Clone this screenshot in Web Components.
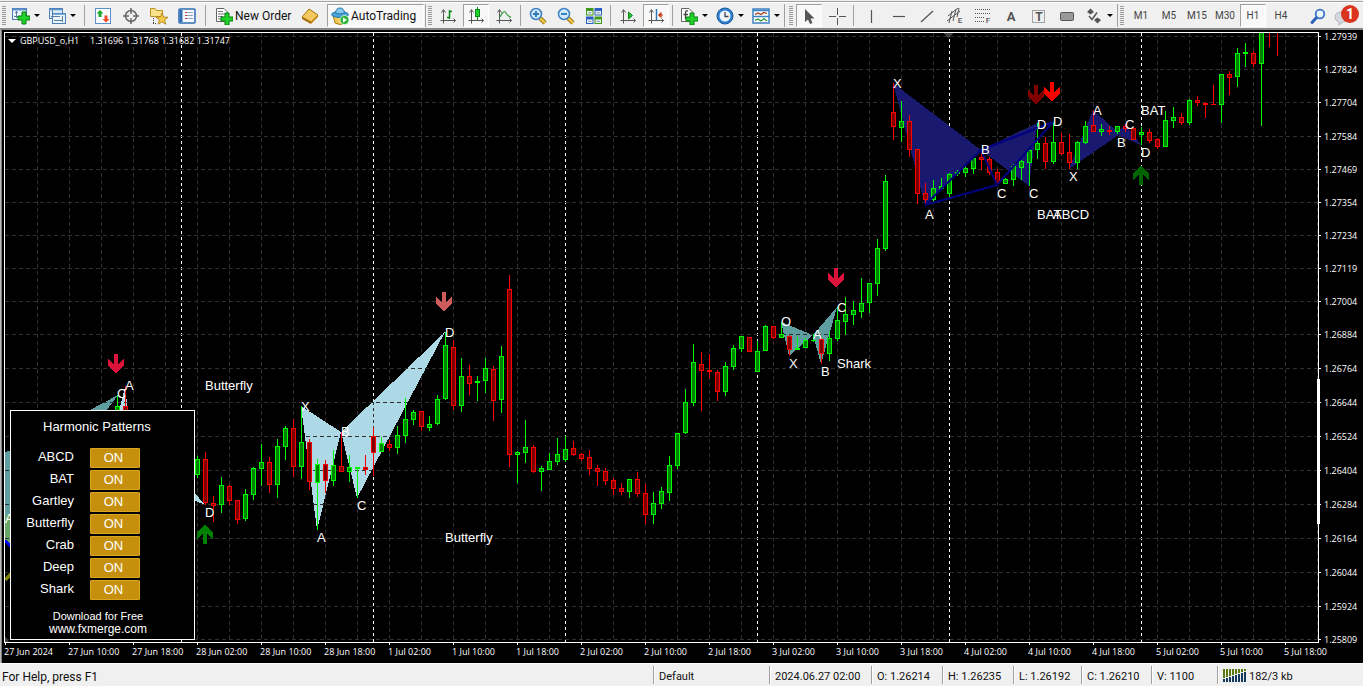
<!DOCTYPE html>
<html lang="en">
<head>
<meta charset="utf-8">
<title>GBPUSD_o,H1</title>
<style>
html, body { margin: 0; height: 100%; background: #f0f0f0; }
body { font-family: "Open Sans", "Noto Sans", sans-serif; overflow: hidden; }
</style>
</head>
<body>
<trading-terminal></trading-terminal>
<script>
/* ---------- icons (18 x 18 unless noted) ---------- */
const axes = '<path d="M4.500 3.500V16.500M1.500 13.500H16.500" stroke="#555" fill="none"/><path d="M2.500 5.500L4.500 2.500L6.500 5.500M14.500 11.500L16.500 13.500L14.500 15.500" stroke="#555" fill="none"/>';
const plus = (x, y) => `<path transform="translate(${x} ${y})" d="M4 0H8V4H12V8H8V12H4V8H0V4H4Z" fill="#1fd32b" stroke="#0a7d12"/>`;
const lens = sign => `<path d="M11 11L16 16" stroke="#8a6a10" stroke-width="4.500"/><path d="M11 11L16 16" stroke="#f0c742" stroke-width="2.500"/><circle cx="7" cy="7" r="5.500" fill="#cfe9fb" stroke="#3c7fc0" stroke-width="1.500"/><path d="${sign}" stroke="#2a78b8" stroke-width="1.800"/>`;
const glyph = (ch, x, y, size, weight) => `<text x="${x}" y="${y}" font-family="Roboto, sans-serif" font-size="${size}" font-weight="${weight}" text-anchor="middle" fill="#555">${ch}</text>`;
const ICONS = {
  newchart: '<rect x=".5" y="1.500" width="14" height="11" fill="#e8f3fc" stroke="#4a7fb5"/><path d="M1 2.500H14" stroke="#5b93c9" stroke-width="2"/><path d="M4.500 4V11M2 9.500H12M3 5.500H6" stroke="#5d7f9f"/>' + plus(6, 5),
  profiles: '<rect x="1.500" y="1.500" width="13" height="10" fill="#dcebf8" stroke="#4a7fb5"/><rect x="4.500" y="6.500" width="13" height="10" fill="#e8f3fc" stroke="#4a7fb5"/><path d="M1 2.500H15M4 7H18" stroke="#5b93c9" stroke-width="1.500"/><path d="M4.500 3V10M6 13.500H15M14.500 9V15M3 9.500H12" stroke="#5d7f9f"/>',
  market: '<rect x="1.500" y="1.500" width="15" height="15" fill="#fbfdff" stroke="#5b93c9"/><path d="M6 3L9.500 6.500H7.500V10H4.500V6.500H2.500Z" fill="#1faa2e"/><path d="M12 15.500L15.500 12H13.500V8.500H10.500V12H8.500Z" fill="#ee4a2a"/>',
  target: '<circle cx="9" cy="9" r="5.500" fill="none" stroke="#666" stroke-width="1.500"/><path d="M9 1V7M9 11V17M1 9H7M11 9H17" stroke="#666" stroke-width="1.500"/>',
  folder: '<path d="M0.500 9.500V1.500H5L6.500 3.500H12.500V9.500Z" fill="#fbe28a" stroke="#b99126"/><path d="M3.500 11V17M3 16.500H7" stroke="#444" stroke-dasharray="1 1"/><path d="M12 6L13.600 10L18 10.300L14.600 13L15.800 17.200L12 14.800L8.200 17.200L9.400 13L6 10.300L10.400 10Z" fill="#f6c945" stroke="#a97c17" stroke-width=".8"/>',
  terminal: '<rect x="1" y="2" width="16" height="14" rx="1" fill="#f8fbff" stroke="#2e6eb2" stroke-width="1.500"/><path d="M3 3V15" stroke="#2e6eb2" stroke-width="3"/><path d="M7 5.500H9M7 8.500H9M7 11.500H9" stroke="#c33"/><path d="M9 5.500H15M9 8.500H15M9 11.500H15" stroke="#9ab"/>',
  order: '<path d="M1.500 1.500H9L12.500 5V14.500H1.500Z" fill="#fff" stroke="#666"/><path d="M3 4.500H8M3 7H10M3 9.500H8M3 12H7" stroke="#777"/>' + plus(6, 6),
  gold: '<path d="M1 10L8 2L17 8L10 15Z" fill="#f3c85e" stroke="#a8730f"/><path d="M1 10L10 15V17L1 12Z" fill="#a86d0c"/><path d="M10 15L17 8V10L10 17Z" fill="#c68a1a"/>',
  auto: '<path d="M2 8L4 16Q9 19 14 16L16 8Z" fill="#f3cb55" stroke="#a97c17"/><ellipse cx="9" cy="7.500" rx="8.500" ry="3" fill="#4aa3d8" stroke="#2a76a8"/><path d="M4.500 6Q5 1 9 1T13.500 6Q9 8 4.500 6Z" fill="#83c8ee" stroke="#2a76a8"/><circle cx="13.500" cy="13" r="4.500" fill="#27b437" stroke="#fff" stroke-width=".7"/><path d="M12 10.500V15.500L16 13Z" fill="#fff"/>',
  bars: axes + '<path d="M10.500 3V12M8 10.500H10.500M10.500 4.500H13" stroke="#0a8a1a" stroke-width="1.500" fill="none"/>',
  candles: axes + '<path d="M10.500 0V13" stroke="#0a8a1a"/><rect x="8.500" y="2.500" width="4" height="7" fill="#1fd32b" stroke="#0a8a1a"/>',
  line: axes + '<path d="M5 10Q9 2 11 6T16 10" stroke="#3fa34a" stroke-width="1.300" fill="none"/>',
  zoomin: lens('M4 7H10M7 4V10'),
  zoomout: lens('M4 7H10'),
  tile: '<rect x="1" y="1" width="7.500" height="7.500" fill="#3e9a1d"/><rect x="9.500" y="1" width="7.500" height="7.500" fill="#2d5fc4"/><rect x="1" y="9.500" width="7.500" height="7.500" fill="#2d5fc4"/><rect x="9.500" y="9.500" width="7.500" height="7.500" fill="#3e9a1d"/><path d="M2 4H7.500V7.500H2ZM10.500 4H16V7.500H10.500ZM2 12.500H7.500V16H2ZM10.500 12.500H16V16H10.500Z" fill="#f2f7ee"/><path d="M3 5.800H6.500M11.500 5.800H15M3 14.300H6.500M11.500 14.300H15" stroke="#7a9ab8"/>',
  scroll: axes + '<path d="M9.500 5V12L13.500 8.500Z" fill="#27c437" stroke="#0a8a1a"/>',
  shift: axes + '<path d="M9.500 2V13" stroke="#2a76b8" stroke-width="1.500"/><path d="M16 8H12M14 5.500L11.500 8L14 10.500Z" stroke="#c33b12" fill="#c33b12"/>',
  indicators: '<path d="M1.500 1.500H9L12.500 5V14.500H1.500Z" fill="#fff" stroke="#666"/><path d="M8 4Q5.500 3 5.500 6V12M3.500 7.500H8" stroke="#444" stroke-width="1.300" fill="none"/>' + plus(6, 6),
  clock: '<circle cx="9" cy="9" r="8" fill="#2f80d0" stroke="#195a9e"/><circle cx="9" cy="9" r="5.500" fill="#eef6fd"/><path d="M9 5V9.500H12.500" stroke="#445" stroke-width="1.300" fill="none"/>',
  template: '<rect x="1" y="2" width="16" height="14" fill="#fff" stroke="#3f82c4" stroke-width="1.500"/><path d="M1 3.500H17M1 9.500H17" stroke="#3f82c4" stroke-width="1.500"/><path d="M3 7.500L6 6L9 7.500L12 5.500L15 6.500" stroke="#a4341a" stroke-width="1.300" fill="none"/><path d="M3 13.500L6 12L9 14L12 11.500L15 14" stroke="#2a9a35" stroke-width="1.300" fill="none"/>',
  cursor: '<path d="M5 2V15L8 12.500L10 17L12.500 16L10.500 11.500H14.500Z" fill="#555"/>',
  cross: '<path d="M9.500 1V8M9.500 11V18M1 9.500H8M11 9.500H18" stroke="#555" fill="none"/>',
  vline: '<path d="M9.500 3V16" stroke="#555" stroke-width="1.200"/>',
  hline: '<path d="M3 9.500H15" stroke="#555" stroke-width="1.200"/>',
  trend: '<path d="M3 15L15 4" stroke="#555" stroke-width="1.300"/>',
  channel: '<path d="M1 14L14 4M2 9L12 1M3 16L6 4M7 14L10 2M11 10L13 1" stroke="#555" fill="none"/>' + glyph("E", 14, 16, 8, 500),
  fibo: '<path d="M1 2.500H16M1 6.500H16M1 10.500H10M1 14.500H10" stroke="#555" stroke-dasharray="1 1"/>' + glyph("F", 14, 16, 8, 500),
  text: glyph("A", 9, 14, 13, 700),
  label: '<rect x="2.500" y="3.500" width="12" height="12" fill="none" stroke="#555" stroke-dasharray="1 1"/>' + glyph("T", 9, 14, 12, 700),
  rect: '<rect x="2.500" y="5.500" width="13" height="8" rx="1" fill="#999" stroke="#555"/>',
  arrows: '<path d="M2 5L5.500 1.500L9 5L5.500 7.500Z" fill="#555"/><path d="M9 13L12.500 10.500L16 13L12.500 16.500Z" fill="#555"/><path d="M4 9L7 12.500L12 5.500" stroke="#555" fill="none" stroke-width="1.500"/>',
  search: '<path d="M8 10L3 15.500" stroke="#2c62b8" stroke-width="3" stroke-linecap="round"/><circle cx="11" cy="7" r="4.300" fill="#eef5fd" stroke="#3c74c8" stroke-width="1.800"/>',
};
const svgIcon = name => `<svg width="18" height="18" viewBox="0 0 18 18" aria-hidden="true">${ICONS[name]}</svg>`;
const shadow = (host, html) => { host.attachShadow({ mode: "open" }).innerHTML = html; return host.shadowRoot; };

/* A toolbar button: icon, optional slotted caption, optional drop-down mark. */
customElements.define("tool-button", class extends HTMLElement {
  connectedCallback() {
    const icon = this.getAttribute("icon");
    shadow(this, `<style>
      :host { display: flex; flex: none; width: 28px; }
      :host([menu]) { width: 36px; }
      :host([wide]) { width: auto; }
      button { flex: 1; display: flex; align-items: center; justify-content: center; gap: 4px; margin: 0 1px;
        padding: 0; border: 1px solid transparent; background: none; color: inherit; font: inherit; white-space: nowrap; }
      :host([wide]) button { justify-content: flex-start; padding: 0 3px; gap: 2px; }
      :host([pressed]) button { border-color: #a0a0a0 #fff #fff #a0a0a0; background: #f8f8f8; }
      svg { flex: none; }
      i { flex: none; border: 3px solid transparent; border-top-color: #000; border-bottom: 0; }
    </style><button aria-label="${this.getAttribute("name") || this.textContent}" ${this.hasAttribute("pressed") ? 'aria-pressed="true"' : ""}>
      ${icon ? svgIcon(icon) : ""}<slot></slot>${this.hasAttribute("menu") ? "<i></i>" : ""}</button>`);
  }
});

/* A dockable run of buttons with a grip at its left. */
customElements.define("tool-group", class extends HTMLElement {
  connectedCallback() {
    shadow(this, `<style>
      :host { display: flex; flex: none; border-right: 1px solid #a0a0a0; }
      :host([open]) { border-right: 0; }
      .grip { width: 4px; margin: 2px 2px; background: repeating-linear-gradient(#9a9a9a 0 1px, transparent 1px 2px); }
      :host([open]) .grip { margin-right: 3px; }
      ::slotted(hr) { width: 1px; height: auto; margin: 1px 3px 1px 2px; border: 0; background: #a0a0a0; }
      :host([roomy]) ::slotted(hr) { margin: 1px 4px; }
    </style><div class="grip"></div><slot></slot>`);
  }
});

customElements.define("tool-bar", class extends HTMLElement {
  connectedCallback() {
    shadow(this, `<style>
      :host { display: flex; flex: none; height: 23px; padding: 1px 0; background: #f0f0f0; border-top: 1px solid #fff;
        font: 12px Roboto, sans-serif; color: #111; border-bottom: 2px solid #888; margin-top: 2px; }
      .frames { font-size: 10px; color: #444; }
      .end { flex: 1; }
      .order { width: 84px; } .gold { width: 32px; } .auto { width: 99px; }
      .cursors { padding-left: 2px; }
      .news { position: relative; flex: none; width: 28px; margin-right: 3px; border: 0; padding: 0; background: none; }
      .news svg { position: absolute; left: 1px; top: 6px; }
      .badge { position: absolute; right: 1px; top: 1px; width: 18px; height: 18px; border-radius: 9px; background: #d9351f;
        color: #fff; font: bold 14px/18px Roboto, sans-serif; text-align: center; }
    </style>
    <tool-group roomy>
      <tool-button icon="newchart" name="New chart" menu></tool-button>
      <tool-button icon="profiles" name="Profiles" menu></tool-button><hr>
      <tool-button icon="market" name="Market Watch"></tool-button>
      <tool-button icon="target" name="Data Window"></tool-button>
      <tool-button icon="folder" name="Navigator"></tool-button>
      <tool-button icon="terminal" name="Terminal"></tool-button><hr>
      <tool-button class="order" icon="order" wide>New Order</tool-button>
      <tool-button class="gold" icon="gold" name="MetaEditor"></tool-button>
      <tool-button class="auto" icon="auto" wide pressed>AutoTrading</tool-button>
    </tool-group>
    <tool-group>
      <tool-button icon="bars" name="Bar Chart"></tool-button>
      <tool-button icon="candles" name="Candlesticks" pressed></tool-button>
      <tool-button icon="line" name="Line Chart"></tool-button><hr>
      <tool-button icon="zoomin" name="Zoom In"></tool-button>
      <tool-button icon="zoomout" name="Zoom Out"></tool-button>
      <tool-button icon="tile" name="Tile Windows"></tool-button><hr>
      <tool-button icon="scroll" name="Auto Scroll"></tool-button>
      <tool-button icon="shift" name="Chart Shift" pressed></tool-button><hr>
      <tool-button icon="indicators" name="Indicators" menu></tool-button>
      <tool-button icon="clock" name="Periods" menu></tool-button>
      <tool-button icon="template" name="Templates" menu></tool-button>
    </tool-group>
    <tool-group class="cursors">
      <tool-button icon="cursor" name="Cursor" pressed></tool-button>
      <tool-button icon="cross" name="Crosshair"></tool-button><hr>
      <tool-button icon="vline" name="Vertical Line"></tool-button>
      <tool-button icon="hline" name="Horizontal Line"></tool-button>
      <tool-button icon="trend" name="Trendline"></tool-button>
      <tool-button icon="channel" name="Equidistant Channel"></tool-button>
      <tool-button icon="fibo" name="Fibonacci Retracement"></tool-button>
      <tool-button icon="text" name="Text"></tool-button>
      <tool-button icon="label" name="Text Label"></tool-button>
      <tool-button icon="rect" name="Rectangle"></tool-button>
      <tool-button icon="arrows" name="Arrows" menu></tool-button>
    </tool-group>
    <tool-group class="frames" open>
      <tool-button>M1</tool-button><tool-button>M5</tool-button><tool-button>M15</tool-button>
      <tool-button>M30</tool-button><tool-button pressed>H1</tool-button><tool-button>H4</tool-button>
    </tool-group>
    <div class="end"></div>
    <tool-button icon="search" name="Search"></tool-button>
    <button class="news" aria-label="Messages"><svg width="18" height="16" viewBox="0 0 18 16"><path d="M9 2Q16 2 16 7Q16 12 10 12L6 15V12Q2 11 2 7Q2 2 9 2Z" fill="#d5d8de" stroke="#b4b8c0"/></svg><span class="badge">1</span></button>`);
  }
});

/* ---------- chart data: one row per hour: bar number, high, body top, body bottom, low, direction ---------- */
const BARS = `14 395 406 430 430 u|15 386 406 430 430 d|24 456 459 475 478 u|25 452 459 503 505 d|26 496 503 506 522 d|27 477 485 505 513 u
28 485 486 501 505 d|29 500 500 520 524 d|30 489 494 519 521 u|31 467 468 495 500 u|32 444 462 469 486 u|33 457 462 485 493 d
34 439 446 485 498 u|35 426 428 447 460 u|36 419 428 467 477 d|37 406 442 467 479 u|38 439 442 482 490 d|39 459 464 483 530 u
40 460 464 481 493 d|41 450 465 481 486 u|42 432 466 472 472 d|43 455 467 472 482 u|44 467 467 469 498 u|45 455 467 470 475 d
46 427 436 453 476 d|47 437 443 452 452 u|48 440 444 448 451 d|49 426 435 448 454 u|50 398 419 436 443 u|51 410 412 420 425 u
52 411 411 427 431 d|53 416 424 428 431 u|54 395 399 424 425 u|55 332 345 399 400 u|56 340 347 406 410 d|57 358 376 406 412 u
58 365 376 384 395 d|59 376 381 383 401 u|60 358 368 381 393 u|61 366 369 401 421 d|62 346 356 400 413 u|63 275 289 455 467 d
64 451 452 455 483 u|65 420 447 453 463 u|66 445 447 472 473 d|67 466 468 472 491 u|68 453 461 470 470 u|69 438 454 462 465 u
70 436 449 460 462 u|71 441 448 455 456 d|72 453 454 459 461 d|73 450 457 469 475 d|74 465 468 472 486 d|75 468 471 481 485 d
76 478 480 489 495 d|77 483 488 492 495 d|78 479 479 492 498 u|79 472 479 494 497 d|80 484 493 515 524 d|81 492 503 515 524 u
82 487 491 504 509 u|83 456 465 493 501 u|84 433 433 466 469 u|85 389 402 433 434 u|86 344 362 403 406 u|87 352 364 371 411 d
88 354 370 372 378 d|89 370 372 392 401 d|90 362 366 392 396 u|91 345 348 367 370 u|92 336 336 349 352 u|93 337 337 352 352 d
94 341 351 372 372 u|95 325 326 351 351 u|96 326 326 338 339 d|97 322 334 338 338 u|98 335 336 350 356 d|99 337 348 350 350 u
100 338 340 348 348 u|101 334 340 341 342 u|102 338 339 354 364 d|103 332 338 354 361 u|104 307 320 339 341 u|105 297 314 322 335 u
106 301 310 315 325 u|107 278 303 312 318 u|108 283 283 303 313 u|109 239 248 284 296 u|110 175 181 249 251 u|111 83 112 127 140 d
112 101 121 128 142 u|113 115 121 150 157 d|114 149 149 194 204 d|115 183 193 200 205 d|116 180 188 200 202 u|117 178 186 189 189 u
118 173 174 194 197 u|119 170 172 174 176 u|120 165 168 173 177 u|121 156 158 169 174 u|122 153 157 160 170 d|123 157 159 173 175 d
124 169 172 183 183 d|125 178 179 184 184 u|126 164 166 180 186 u|127 160 161 168 180 u|128 149 150 163 186 u|129 123 143 150 159 u
130 137 143 162 169 d|131 122 142 162 164 u|132 133 142 154 155 d|133 134 152 163 169 d|134 141 142 163 169 u|135 121 126 143 144 u
136 110 125 132 132 d|137 124 129 132 136 u|138 126 130 132 135 d|139 126 126 132 134 u|140 124 126 129 132 d|141 128 128 140 140 d
142 127 132 135 145 u|143 129 132 141 143 d|144 138 139 147 149 d|145 111 120 147 147 u|146 107 117 121 128 u|147 113 117 123 125 d
148 99 100 123 125 u|149 96 100 103 106 d|150 102 103 105 118 d|151 85 104 105 105 d|152 74 74 105 123 u|153 71 74 78 95 d
154 48 53 77 87 u|155 43 52 54 67 u|156 51 53 64 67 d|157 20 20 64 126 u|158 20 20 20 47 d|159 20 20 20 56 d`.split(/[|\n]/).map(r => r.split(" "));

const LEVELS = [36, 69, 102, 136, 169, 202, 235, 268, 301, 334, 368, 402, 436, 470, 504, 538, 572, 606, 639];
const PRICES = "1.27939 1.27824 1.27704 1.27584 1.27469 1.27354 1.27234 1.27119 1.27004 1.26884 1.26764 1.26644 1.26524 1.26404 1.26284 1.26164 1.26044 1.25924 1.25809".split(" ");
const TIMES = ["27 Jun 2024", "27 Jun 10:00", "27 Jun 18:00", "28 Jun 02:00", "28 Jun 10:00", "28 Jun 18:00", "1 Jul 02:00", "1 Jul 10:00", "1 Jul 18:00", "2 Jul 02:00", "2 Jul 10:00", "2 Jul 18:00", "3 Jul 02:00", "3 Jul 10:00", "3 Jul 18:00", "4 Jul 02:00", "4 Jul 10:00", "4 Jul 18:00", "5 Jul 02:00", "5 Jul 10:00", "5 Jul 18:00"];
const DAYS = [181, 373, 565, 757, 949, 1141];
const LIGHT = [["#add8e6", "301,406 317,530 341,432"], ["#add8e6", "341,432 357,498 445,332"], ["#5f9ea0", "781,322 789,356 813,335"],
  ["#5f9ea0", "813,335 821,364 837,307"], ["#5f9ea0", "88,411 118,395 106,411"], ["#add8e6", "119,411 125,387 128,411"],
  ["#add8e6", "194,492 205,505 194,500"], ["#5f9ea0", "5,452 12,450 12,515 5,515"], ["#6aa56a", "5,515 12,515 12,548 5,540"]];
const NAVY = ["893,83 925,205 981,150", "981,150 1029,186 1037,123", "1069,169 1093,110 1120,134", "1115,134 1125,124 1141,145"];
const MARKS = [[301, 411, "X"], [317, 542, "A"], [341, 436, "B"], [357, 510, "C"], [445, 337, "D"], [781, 326, "O"], [789, 368, "X"],
  [813, 339, "A"], [821, 376, "B"], [837, 312, "C"], [837, 368, "Shark"], [893, 88, "X"], [925, 219, "A"], [981, 154, "B"],
  [997, 198, "C"], [1029, 198, "C"], [1037, 129, "D"], [1053, 126, "D"], [1069, 181, "X"], [1093, 115, "A"], [1117, 147, "B"],
  [1125, 129, "C"], [1141, 157, "D"], [1141, 115, "BAT"], [1037, 219, "BAT"], [1053, 219, "ABCD"], [205, 390, "Butterfly"],
  [445, 542, "Butterfly"], [125, 390, "A"], [117, 398, "C"], [205, 517, "D"], [5, 523, "A"]];
const ARROWS = [[116, 354, "#dc143c"], [444, 292, "#cd5c5c"], [836, 268, "#dc143c"], [1036, 85, "#800000"], [1052, 82, "#ff0000"],
  [205, 544, "#008000", 1], [1141, 185, "#006400", 1]];

/* The drawing canvas: 8 px per bar, grid every 4 bars. */
customElements.define("candle-plot", class extends HTMLElement {
  connectedCallback() {
    let g = "";
    for (let x = 37; x < 2600; x += 32) g += `<path d="M${x}.500 33V1600" class="grid"/>`;
    for (const x of DAYS) g += `<path d="M${x}.500 33V1600" class="day"/>`;
    for (const [c, p] of LIGHT) g += `<polygon points="${p}" fill="${c}"/>`;
    for (const y of LEVELS) g += `<path d="M5 ${y}.500H2600" class="grid"/>`;
    g += '<path d="M373.500 402V468" stroke="#2b2b2b" stroke-dasharray="3 3"/>';
    for (const p of NAVY) g += `<polygon points="${p}" fill="#191970"/>`;
    for (const [k, hi, top, bot, lo, dir] of BARS) {
      const x = 5 + 8 * k, h = bot - top, up = dir === "u";
      const line = up ? "#00ff00" : "#ff0000";
      g += `<path d="M${x} ${hi}H${x + 1}V${lo}H${x}Z" fill="${line}"/>`;
      if (h > 0) g += `<rect x="${x - 2}" y="${top}" width="5" height="${h}" fill="${line}"/>`;
      if (h > 2) g += `<rect x="${x - 1}" y="${+top + 1}" width="3" height="${h - 2}" fill="${up ? "#008000" : "#800000"}"/>`;
    }
    g += '<path d="M925 205L981 150L997 185L1053 122L981 150M925 205L997 185" fill="none" stroke="#000080" stroke-width="2" shape-rendering="geometricPrecision"/>';
    g += '<path d="M5 541L12 547" stroke="#0000ff" stroke-width="3"/><path d="M5 580L12 573" stroke="#808000" stroke-width="3"/>';
    g += '<path d="M943 33H954L948.500 38Z" fill="#404040"/><path d="M5 640V636L9 642H5Z" fill="#404040"/>';
    for (const [x, y, c, flip] of ARROWS)
      g += `<path transform="translate(${x} ${y})${flip ? " scale(1 -1)" : ""}" d="M-2 0H2V10L8 5V12L0 19L-8 12V5L-2 10Z" fill="${c}"/>`;
    for (const [x, y, t] of MARKS) g += `<text x="${x}" y="${y}">${t}</text>`;
    shadow(this, `<style>
      :host { display: block; position: relative; overflow: hidden; border: 1px solid #fff; min-width: 0; min-height: 0; }
      svg { position: absolute; inset: 0; width: 100%; height: 100%; }
      .grid { stroke: #2f2f2f; stroke-dasharray: 4 3; fill: none; }
      .day { stroke: #fff; stroke-dasharray: 3 3; }
      text { fill: #fff; font: 13px "Liberation Sans", Arial, sans-serif; }
      .title { position: absolute; left: 3px; top: 2px; display: flex; align-items: center; gap: 4px;
        font-size: 9px; line-height: 12px; color: #fff; white-space: pre; }
      .title i { border: 4px solid transparent; border-top-color: #fff; border-bottom: 0; }
      .title b { font-weight: 400; min-width: 66px; }
      harmonic-panel { position: absolute; left: 5px; bottom: 2px; }
    </style><svg shape-rendering="crispEdges"><g transform="translate(-5 -33)">${g}</g></svg>
    <div class="title"><i></i><b>GBPUSD_o,H1</b><span>1.31696 1.31768 1.31682 1.31747</span></div>
    <harmonic-panel></harmonic-panel>`);
  }
});

customElements.define("price-scale", class extends HTMLElement {
  connectedCallback() {
    const rows = LEVELS.slice(1).map((y, i) => y - LEVELS[i] + "px").join(" ");
    shadow(this, `<style>
      :host { display: block; position: relative; min-height: 0; color: #fff; font-size: 9px; }
      ol { margin: 0; padding: 0; list-style: none; display: grid; grid-template-rows: ${rows} 10px; }
      li { display: flex; align-items: start; height: 9px; line-height: 9px; gap: 3px; }
      li::before { content: ""; width: 2px; height: 1px; margin-top: 4px; background: #fff; }
      .thumb { position: absolute; left: -2px; top: 347px; width: 3px; height: 145px; background: #fff; }
    </style><div class="thumb"></div><ol>${PRICES.map(p => `<li>${p}</li>`).join("")}</ol>`);
  }
});

customElements.define("time-scale", class extends HTMLElement {
  connectedCallback() {
    shadow(this, `<style>
      :host { display: block; color: #fff; font-size: 9px; min-width: 0; }
      ol { margin: 0; padding: 0; list-style: none; display: flex; }
      li { flex: none; width: 64px; line-height: 14px; white-space: nowrap; }
      li::before { content: ""; display: block; width: 1px; height: 2px; margin-left: 1px; background: #fff; }
    </style><ol>${TIMES.map(t => `<li>${t}</li>`).join("")}</ol>`);
  }
});

customElements.define("price-chart", class extends HTMLElement {
  connectedCallback() {
    shadow(this, `<style>
      :host { display: grid; flex: 1; min-height: 0; grid-template: minmax(0, 1fr) 20px / minmax(0, 1fr) 44px; overflow: hidden;
        padding: 2px 0 0 3px; background: #000; border-left: 1px solid #b8b8b8; box-shadow: inset 1px 0 #808080; }
      time-scale { grid-column: 1 / 3; }
    </style><candle-plot></candle-plot><price-scale></price-scale><time-scale></time-scale>`);
  }
});

/* One pattern name with its ON switch. */
customElements.define("pattern-toggle", class extends HTMLElement {
  connectedCallback() {
    shadow(this, `<style>
      :host { display: grid; grid-template-columns: 63px 50px; column-gap: 16px; height: 20px; }
      label { text-align: right; line-height: 18px; }
      button { padding: 0 3px 0 0; border: 1px solid #daa520; border-radius: 1px; background: #c6900e; color: #fff; font: inherit; line-height: 18px; }
    </style><label for="b"><slot></slot></label><button id="b" aria-pressed="true">ON</button>`);
  }
});

customElements.define("harmonic-panel", class extends HTMLElement {
  connectedCallback() {
    shadow(this, `<style>
      :host { display: block; box-sizing: border-box; width: 185px; height: 230px; border: 1px solid #fff; background: #000; color: #fff;
        font: 13px "Liberation Sans", Arial, sans-serif; }
      h2 { margin: 8px 0 14px 32px; font: inherit; line-height: 15px; }
      .rows { display: grid; row-gap: 2px; }
      p { margin: 10px 9px 0 0; font-size: 11px; line-height: 13px; text-align: center; }
      a { color: inherit; text-decoration: none; font-size: 12px; }
    </style><h2>Harmonic Patterns</h2>
    <div class="rows">${["ABCD", "BAT", "Gartley", "Butterfly", "Crab", "Deep", "Shark"].map(n => `<pattern-toggle>${n}</pattern-toggle>`).join("")}</div>
    <p>Download for Free<br><a href="#">www.fxmerge.com</a></p>`);
  }
});

customElements.define("status-bar", class extends HTMLElement {
  connectedCallback() {
    let bars = "";
    for (let i = 0; i < 8; i++) bars += `<path d="M${i * 3} 0h2v${9 - i}h-2z" fill="#5d7a12"/><path d="M${i * 3} ${10 - i}h2V13h-2z" fill="#123a5c"/>`;
    shadow(this, `<style>
      :host { display: flex; flex: none; height: 22px; border-top: 1px solid #fff; background: #f0f0f0; color: #111;
        font: 11px/22px Roboto, "Open Sans", sans-serif; white-space: nowrap; }
      span { box-sizing: border-box; flex: none; margin: 2px 0; line-height: 22px; padding-left: 5px; border-left: 1px solid #a0a0a0; box-shadow: inset 1px 0 #fff; }
      .help { flex: 1; padding-left: 2px; border: 0; box-shadow: none; font-size: 12px; }
      svg { vertical-align: -2px; margin-right: 3px; }
    </style><span class="help">For Help, press F1</span><span style="width:116px">Default</span><span style="width:102px">2024.06.27 02:00</span>
    <span style="width:71px">O: 1.26214</span><span style="width:71px">H: 1.26235</span><span style="width:68px">L: 1.26192</span>
    <span style="width:70px">C: 1.26210</span><span style="width:66px">V: 1100</span>
    <span style="width:146px"><svg width="23" height="13">${bars}</svg>182/3 kb</span>`);
  }
});

customElements.define("trading-terminal", class extends HTMLElement {
  connectedCallback() {
    shadow(this, `<style>:host { display: flex; flex-direction: column; height: 100vh; background: #f0f0f0; }
      .rule { flex: none; height: 1px; margin-top: 1px; background: #a0a0a0; margin-bottom: -2px; }</style>
      <div class="rule"></div><tool-bar></tool-bar><price-chart></price-chart><status-bar></status-bar>`);
  }
});
</script>
</body>
</html>
